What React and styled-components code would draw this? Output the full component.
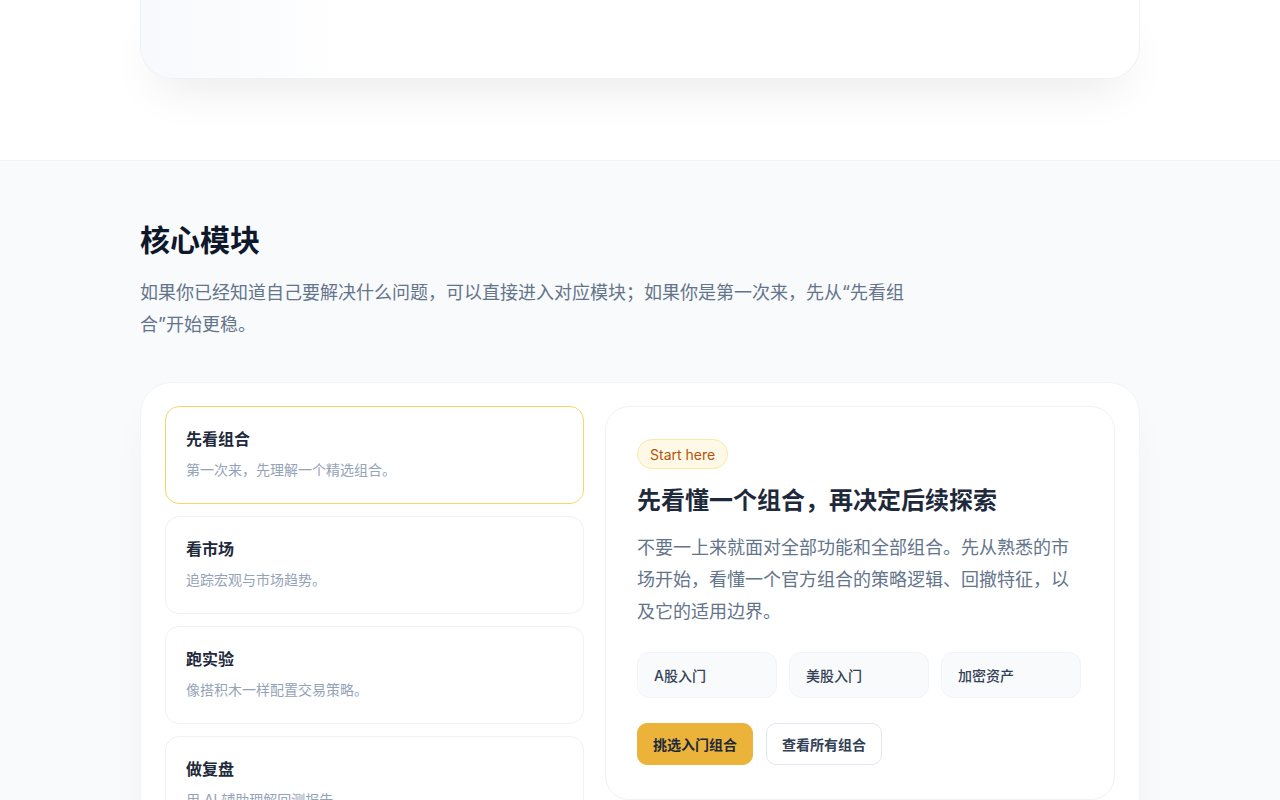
import styled, { createGlobalStyle } from "styled-components";

const GlobalStyle = createGlobalStyle`
  * { box-sizing: border-box; }
  body {
    margin: 0;
    background: #ffffff;
    font-family: Inter, "Noto Sans CJK SC", sans-serif;
    color: #0f172a;
  }
  h1, h2, h3, p { margin: 0; }
`;

const modules = [
  { title: "先看组合", desc: "第一次来，先理解一个精选组合。", active: true },
  { title: "看市场", desc: "追踪宏观与市场趋势。" },
  { title: "跑实验", desc: "像搭积木一样配置交易策略。" },
  { title: "做复盘", desc: "用 AI 辅助理解回测报告。" },
];

const markets = ["A股入门", "美股入门", "加密资产"];

const App = () => {
  return (
    <>
      <GlobalStyle />
      <TopSection>
        <Container>
          <HeroCardTail />
        </Container>
      </TopSection>
      <ModulesSection>
        <Container>
          <SectionTitle>核心模块</SectionTitle>
          <SectionLead>
            如果你已经知道自己要解决什么问题，可以直接进入对应模块；如果你是第一次来，先从“先看组合”开始更稳。
          </SectionLead>
          <ModuleCard>
            <ModuleList>
              {modules.map((m) => (
                <ModuleItem key={m.title} $active={m.active}>
                  <ModuleTitle>{m.title}</ModuleTitle>
                  <ModuleDesc>{m.desc}</ModuleDesc>
                </ModuleItem>
              ))}
            </ModuleList>
            <DetailPanel>
              <Badge>Start here</Badge>
              <DetailTitle>先看懂一个组合，再决定后续探索</DetailTitle>
              <DetailText>
                不要一上来就面对全部功能和全部组合。先从熟悉的市场开始，看懂一个官方组合的策略逻辑、回撤特征，以及它的适用边界。
              </DetailText>
              <ChipRow>
                {markets.map((m) => (
                  <Chip key={m}>{m}</Chip>
                ))}
              </ChipRow>
              <ButtonRow>
                <Button $primary>挑选入门组合</Button>
                <Button>查看所有组合</Button>
              </ButtonRow>
            </DetailPanel>
          </ModuleCard>
        </Container>
      </ModulesSection>
    </>
  );
};

export default App;

const Container = styled.div`
  width: 1000px;
  margin: 0 auto;
`;

const TopSection = styled.section`
  background: #ffffff;
  padding-bottom: 81px;
  border-bottom: 1px solid #f1f5f9;
`;

const HeroCardTail = styled.div`
  height: 79px;
  border: 1px solid #eef2f6;
  border-top: none;
  border-radius: 0 0 32px 32px;
  background: linear-gradient(90deg, #f7f9fc 0%, #fbfcfe 12%, #ffffff 20%);
  box-shadow: 0 24px 48px -18px rgba(15, 23, 42, 0.1);
`;

const ModulesSection = styled.section`
  background: #f8fafc;
  padding: 61px 0 80px;
`;

const SectionTitle = styled.h2`
  font-size: 30px;
  line-height: 36px;
  font-weight: 700;
  color: #0f172a;
`;

const SectionLead = styled.p`
  margin-top: 19px;
  max-width: 772px;
  font-size: 18px;
  line-height: 32px;
  color: #64748b;
`;

const ModuleCard = styled.div`
  margin-top: 41px;
  display: grid;
  grid-template-columns: 419px 510px;
  gap: 21px;
  padding: 23px 24px;
  background: #ffffff;
  border: 1px solid #f1f5f9;
  border-radius: 32px;
  box-shadow: 0 20px 50px -20px rgba(15, 23, 42, 0.08);
`;

const ModuleList = styled.div`
  display: flex;
  flex-direction: column;
  gap: 12px;
`;

const ModuleItem = styled.div`
  padding: 20px 20px 22px;
  background: #ffffff;
  border: 1px solid ${(p) => (p.$active ? "#f6d66b" : "#eef2f6")};
  border-radius: 14px;
`;

const ModuleTitle = styled.h3`
  font-size: 16px;
  line-height: 24px;
  font-weight: 700;
  color: #1e293b;
`;

const ModuleDesc = styled.p`
  margin-top: 8px;
  font-size: 14px;
  line-height: 22px;
  color: #94a3b8;
`;

const DetailPanel = styled.div`
  padding: 32px 31px 34px;
  border: 1px solid #eef2f6;
  border-radius: 24px;
  background: #ffffff;
  align-self: start;
`;

const Badge = styled.span`
  display: inline-flex;
  align-items: center;
  height: 30px;
  padding: 0 12px;
  border-radius: 999px;
  background: #fef9e7;
  border: 1px solid #fbe7a6;
  color: #b45309;
  font-size: 14px;
`;

const DetailTitle = styled.h3`
  margin-top: 15px;
  font-size: 24px;
  line-height: 34px;
  font-weight: 700;
  color: #1e293b;
`;

const DetailText = styled.p`
  margin-top: 14px;
  max-width: 440px;
  font-size: 18px;
  line-height: 32px;
  color: #64748b;
`;

const ChipRow = styled.div`
  margin-top: 24px;
  display: grid;
  grid-template-columns: repeat(3, 140px);
  gap: 12px;
`;

const Chip = styled.div`
  height: 46px;
  display: flex;
  align-items: center;
  padding: 0 16px;
  background: #f8fafc;
  border: 1px solid #f1f5f9;
  border-radius: 12px;
  font-size: 14px;
  font-weight: 500;
  color: #334155;
`;

const ButtonRow = styled.div`
  margin-top: 25px;
  display: flex;
  gap: 13px;
`;

const Button = styled.button`
  height: 42px;
  padding: 0 15px;
  border-radius: 10px;
  font-family: inherit;
  font-size: 14px;
  font-weight: ${(p) => (p.$primary ? 700 : 600)};
  color: ${(p) => (p.$primary ? "#1e293b" : "#334155")};
  background: ${(p) => (p.$primary ? "#ebb33a" : "#ffffff")};
  border: 1px solid ${(p) => (p.$primary ? "#ebb33a" : "#e2e8f0")};
  cursor: pointer;
`;
